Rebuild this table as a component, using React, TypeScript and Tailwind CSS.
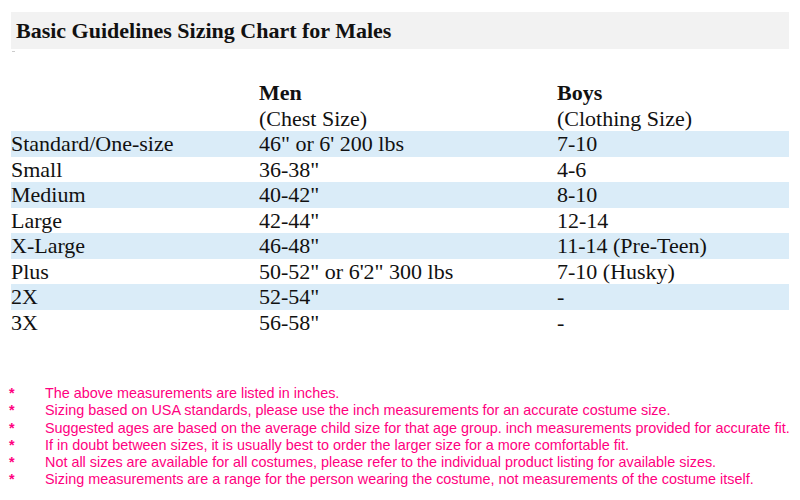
const rows: [string, string, string][] = [
  ["Standard/One-size", "46\" or 6' 200 lbs", "7-10"],
  ["Small", "36-38\"", "4-6"],
  ["Medium", "40-42\"", "8-10"],
  ["Large", "42-44\"", "12-14"],
  ["X-Large", "46-48\"", "11-14 (Pre-Teen)"],
  ["Plus", "50-52\" or 6'2\" 300 lbs", "7-10 (Husky)"],
  ["2X", "52-54\"", "-"],
  ["3X", "56-58\"", "-"],
];

const notes = [
  "The above measurements are listed in inches.",
  "Sizing based on USA standards, please use the inch measurements for an accurate costume size.",
  "Suggested ages are based on the average child size for that age group. inch measurements provided for accurate fit.",
  "If in doubt between sizes, it is usually best to order the larger size for a more comfortable fit.",
  "Not all sizes are available for all costumes, please refer to the individual product listing for available sizes.",
  "Sizing measurements are a range for the person wearing the costume, not measurements of the costume itself.",
];

const serif = "font-['Liberation_Serif','Times_New_Roman',serif]";

export default function App() {
  return (
    <div className="w-[800px] h-[500px] bg-white overflow-hidden pt-[12px] text-[#111]">
      <div className={`mx-[11px] h-[37px] bg-[#f2f2f2] flex items-center pl-[5px] ${serif} font-bold text-[22px]`}>
        Basic Guidelines Sizing Chart for Males
      </div>
      <div className="ml-[12px] mt-[2px] w-[3px] h-px bg-[#ccc]" />

      <div className={`mx-[11px] mt-[28px] ${serif} text-[22px] leading-[25.5px]`}>
        <div className="flex">
          <div className="w-[248px]" />
          <div className="w-[298px]">
            <div className="font-bold">Men</div>
            <div>(Chest Size)</div>
          </div>
          <div>
            <div className="font-bold">Boys</div>
            <div>(Clothing Size)</div>
          </div>
        </div>
        {rows.map((r, i) => (
          <div key={r[0]} className={`flex h-[25.5px] ${i % 2 === 0 ? "bg-[#daecf8]" : "bg-white"}`}>
            <div className="w-[248px]">{r[0]}</div>
            <div className="w-[298px]">{r[1]}</div>
            <div>{r[2]}</div>
          </div>
        ))}
      </div>

      <div className="mt-[50px] font-['Liberation_Sans',Arial,sans-serif] text-[14.4px] leading-[17.3px] text-[#ff0080]">
        {notes.map((n) => (
          <div key={n} className="flex">
            <div className="w-[45px] pl-[9px] font-bold">*</div>
            <div>{n}</div>
          </div>
        ))}
      </div>
    </div>
  );
}
